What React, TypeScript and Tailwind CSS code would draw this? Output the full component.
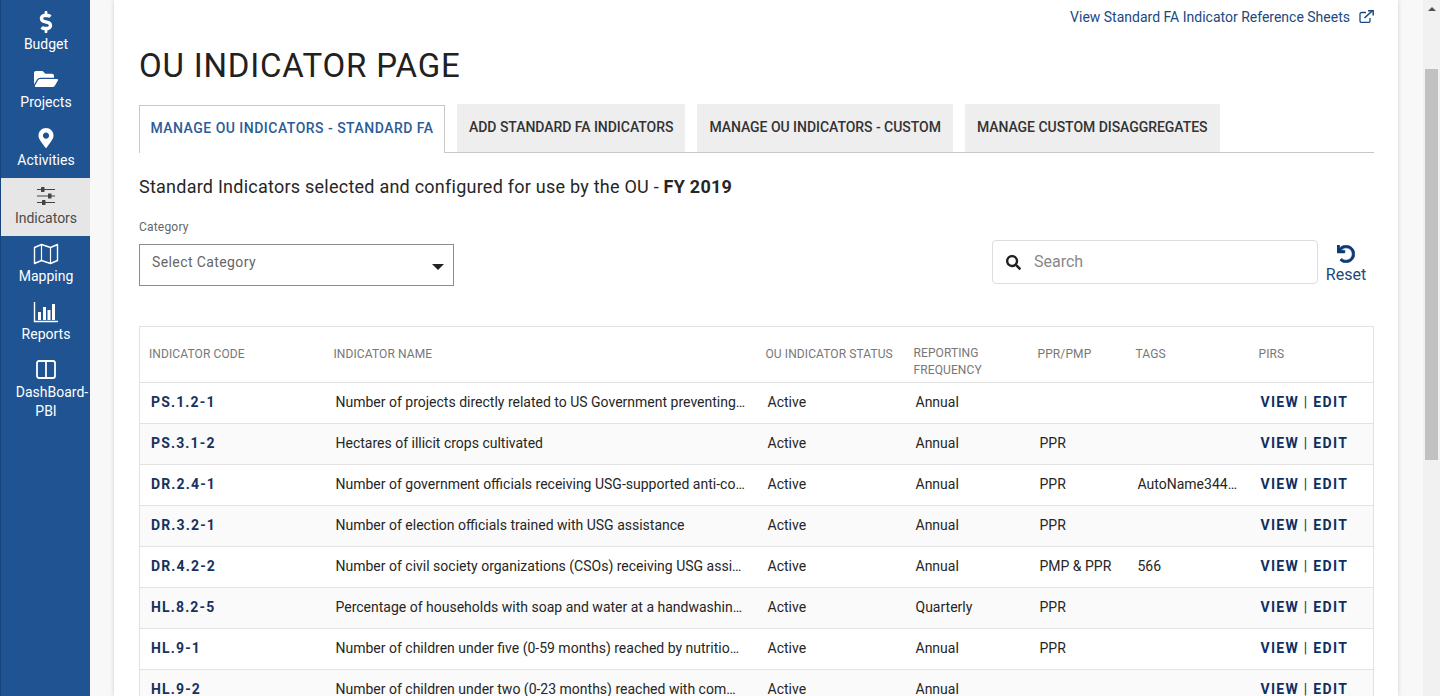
import React from 'react';
import { FaDollarSign, FaFolderOpen, FaMapMarkerAlt, FaSearch, FaUndo } from 'react-icons/fa';

const SlidersIcon = () => (
  <svg width="20" height="20" viewBox="0 0 20 20" fill="none" className="text-[#444]">
    <path d="M1 3.5H19M1 10H19M1 16.5H19" stroke="currentColor" strokeWidth="1" />
    <rect x="5" y="1" width="3.5" height="5" rx="0.5" fill="currentColor" />
    <rect x="12" y="7.5" width="3.5" height="5" rx="0.5" fill="currentColor" />
    <rect x="6" y="14" width="3.5" height="5" rx="0.5" fill="currentColor" />
  </svg>
);

const MapIcon = () => (
  <svg width="26" height="22" viewBox="0 0 26 22" fill="none" className="text-white">
    <path d="M1.5 4.5L8.5 1.5L17.5 4.5L24.5 1.5V17.5L17.5 20.5L8.5 17.5L1.5 20.5Z" stroke="currentColor" strokeWidth="1.4" strokeLinejoin="round" />
    <path d="M8.5 1.5V17.5M17.5 4.5V20.5" stroke="currentColor" strokeWidth="1.2" />
  </svg>
);

const ReportsIcon = () => (
  <svg width="26" height="22" viewBox="0 0 26 22" fill="none" className="text-white">
    <path d="M1.5 1V20.5H25" stroke="currentColor" strokeWidth="1.4" />
    <rect x="5" y="11" width="3" height="8" fill="currentColor" />
    <rect x="10" y="6" width="3" height="13" fill="currentColor" />
    <rect x="14.5" y="9" width="3" height="10" fill="currentColor" />
    <rect x="19" y="3" width="3" height="16" fill="currentColor" />
  </svg>
);

const ColumnsIcon = () => (
  <svg width="20" height="19" viewBox="0 0 20 19" fill="none" className="text-white">
    <rect x="1" y="1" width="18" height="17" rx="2" stroke="currentColor" strokeWidth="1.8" />
    <path d="M10 1V18" stroke="currentColor" strokeWidth="1.8" />
  </svg>
);

const LinkIcon = () => (
  <svg width="15" height="13" viewBox="0 0 15 13" fill="none" className="text-[#1b4a80]">
    <path d="M7 2.5H2.5A1.5 1.5 0 0 0 1 4V11A1.5 1.5 0 0 0 2.5 12.5H9.5A1.5 1.5 0 0 0 11 11V8" stroke="currentColor" strokeWidth="1.3" />
    <path d="M5.5 8L13 1" stroke="currentColor" strokeWidth="1.7" />
    <path d="M9 0.8H14.2V5.5" stroke="currentColor" strokeWidth="1.5" />
  </svg>
);

const navItems: { label: React.ReactNode; icon: React.ReactNode; active?: boolean }[] = [
  { label: 'Budget', icon: <FaDollarSign className="text-white text-[22px]" /> },
  { label: 'Projects', icon: <FaFolderOpen className="-mt-0.5 text-white text-[24px]" /> },
  { label: 'Activities', icon: <FaMapMarkerAlt className="text-white text-[20px]" /> },
  { label: 'Indicators', icon: <SlidersIcon />, active: true },
  { label: 'Mapping', icon: <MapIcon /> },
  { label: 'Reports', icon: <ReportsIcon /> },
  { label: <><span className="block pl-[12px]">DashBoard-</span>PBI</>, icon: <ColumnsIcon /> },
];

const tabs = ['ADD STANDARD FA INDICATORS', 'MANAGE OU INDICATORS - CUSTOM', 'MANAGE CUSTOM DISAGGREGATES'];

const rows = [
  ['PS.1.2-1', 'Number of projects directly related to US Government preventing and mitigating', 'Annual', '', ''],
  ['PS.3.1-2', 'Hectares of illicit crops cultivated', 'Annual', 'PPR', ''],
  ['DR.2.4-1', 'Number of government officials receiving USG-supported anti-corruption training', 'Annual', 'PPR', 'AutoName3440012'],
  ['DR.3.2-1', 'Number of election officials trained with USG assistance', 'Annual', 'PPR', ''],
  ['DR.4.2-2', 'Number of civil society organizations (CSOs) receiving USG assistance engaged', 'Annual', 'PMP & PPR', '566'],
  ['HL.8.2-5', 'Percentage of households with soap and water at a handwashing station commonly', 'Quarterly', 'PPR', ''],
  ['HL.9-1', 'Number of children under five (0-59 months) reached by nutrition-specific', 'Annual', 'PPR', ''],
  ['HL.9-2', 'Number of children under two (0-23 months) reached with community-level', 'Annual', '', ''],
];

export default function App() {
  return (
    <div className="flex h-[696px] w-[1440px] overflow-hidden bg-[#f8f8f8] font-['Roboto',sans-serif]">
      <nav className="w-[90px] shrink-0 bg-[#1f5391] border-l border-[#17447c] pt-1">
        {navItems.map((item, i) => (
          <div
            key={i}
            className={`flex h-[58px] flex-col items-center pl-px text-center text-sm leading-[19px] ${item.active ? 'bg-[#e6e6e6] text-[#4b4b4b]' : 'text-white'}`}
          >
            <div className="flex h-[31px] shrink-0 items-center justify-center pt-1">{item.icon}</div>
            <div className="whitespace-nowrap">{item.label}</div>
          </div>
        ))}
      </nav>

      <main className="ml-6 w-[1284px] shrink-0 bg-white pl-[25px] pr-[24px] shadow-[0_0_4px_rgba(0,0,0,0.18)]">
        <div className="flex h-[33px] items-center justify-end gap-[9px] text-sm text-[#1b4a80]">
          <span>View Standard FA Indicator Reference Sheets</span>
          <LinkIcon />
        </div>
        <h1 className="mt-[11px] text-[33px] leading-[44px] tracking-[0.8px] text-[#212121]">OU INDICATOR PAGE</h1>

        <div className="mt-[16px] flex h-[49px] items-end gap-3 border-b border-[#c8c8c8]">
          <div className="-mb-px flex h-12 w-[306px] items-center justify-center border border-b-0 border-[#c8c8c8] bg-white pb-1 text-sm font-medium tracking-[0.48px] text-[#2b5c97]">
            MANAGE OU INDICATORS - STANDARD FA
          </div>
          {tabs.map((tab) => (
            <div key={tab} className="flex h-12 items-center bg-[#eeeeee] px-3 pb-0.5 text-sm font-medium tracking-[-0.04px] text-[#333]">
              {tab}
            </div>
          ))}
        </div>

        <h2 className="mt-[22px] text-[18px] leading-6 tracking-[0.24px] text-[#262626]">
          Standard Indicators selected and configured for use by the OU - <b className="font-bold">FY 2019</b>
        </h2>

        <div className="mt-[18px] flex h-[66px] items-start justify-between">
          <div>
            <div className="text-xs leading-5 tracking-[0.2px] text-[#666]">Category</div>
            <div className="mt-[7px] flex h-[42px] w-[315px] items-center justify-between border border-[#8c8c8c] pl-3 pr-[9px] text-sm tracking-[0.4px] text-[#666]">
              <span className="-mt-1.5">Select Category</span>
              <span className="mt-1 h-0 w-0 border-x-[6px] border-t-[6px] border-x-transparent border-t-[#222]" />
            </div>
          </div>
          <div className="mr-2 mt-[23px] flex items-start">
            <div className="flex h-[44px] w-[326px] items-center rounded border border-[#dedede] pl-[13px] text-base text-[#888]">
              <FaSearch className="mr-[13px] text-[15px] text-[#212121]" />
              <span>Search</span>
            </div>
            <div className="ml-2 flex w-[40px] flex-col items-center text-base leading-5 text-[#1b4a80]">
              <FaUndo className="mt-[5px] mb-[2px] stroke-current stroke-[20] text-[18px] text-[#0d3a75]" />
              Reset
            </div>
          </div>
        </div>

        <table className="mt-[43px] w-[1234px] table-fixed border-collapse border border-[#e2e2e2] text-sm text-[#262626]">
          <colgroup>
            <col className="w-[185px]" />
            <col className="w-[432px]" />
            <col className="w-[148px]" />
            <col className="w-[124px]" />
            <col className="w-[98px]" />
            <col className="w-[123px]" />
            <col className="w-[124px]" />
          </colgroup>
          <thead>
            <tr className="h-[56px] text-left align-top text-xs leading-[18px] tracking-[0.1px] text-[#777]">
              <th className="pl-[9px] pt-[18px] font-normal">INDICATOR CODE</th>
              <th className="pl-[9px] pt-[18px] font-normal">INDICATOR NAME</th>
              <th className="pl-[9px] pt-[18px] font-normal">OU INDICATOR STATUS</th>
              <th className="pl-[9px] pt-[18px] font-normal leading-[17px]">REPORTING<br />FREQUENCY</th>
              <th className="pl-[9px] pt-[18px] font-normal">PPR/PMP</th>
              <th className="pl-[9px] pt-[18px] font-normal">TAGS</th>
              <th className="pl-[9px] pt-[18px] font-normal">PIRS</th>
            </tr>
          </thead>
          <tbody>
            {rows.map((row, i) => (
              <tr key={row[0]} className={`h-[41px] border-t border-[#e2e2e2] [&>td]:pb-[2px] ${i % 2 === 1 ? 'bg-[#fafafa]' : 'bg-white'}`}>
                <td className="pl-[11px] font-bold tracking-[1.15px] text-[#17325c]">{row[0]}</td>
                <td className="truncate pl-[11px] pr-[11px]">{row[1]}</td>
                <td className="pl-[11px]">Active</td>
                <td className="pl-[11px]">{row[2]}</td>
                <td className="pl-[11px]">{row[3]}</td>
                <td className="truncate pl-[11px] pr-2">{row[4]}</td>
                <td className="whitespace-nowrap pl-[11px] font-bold tracking-[1.3px] text-[#0f2f63]">
                  VIEW <span className="font-normal text-[#333]">|</span> EDIT
                </td>
              </tr>
            ))}
          </tbody>
        </table>
      </main>

      <div className="ml-auto flex w-[17px] shrink-0 flex-col items-center bg-[#f1f1f1]">
        <span className="mt-[7px] h-0 w-0 border-x-4 border-b-4 border-x-transparent border-b-[#505050]" />
        <div className="mt-[58px] h-[391px] w-[13px] bg-[#c1c1c1]" />
      </div>
    </div>
  );
}
